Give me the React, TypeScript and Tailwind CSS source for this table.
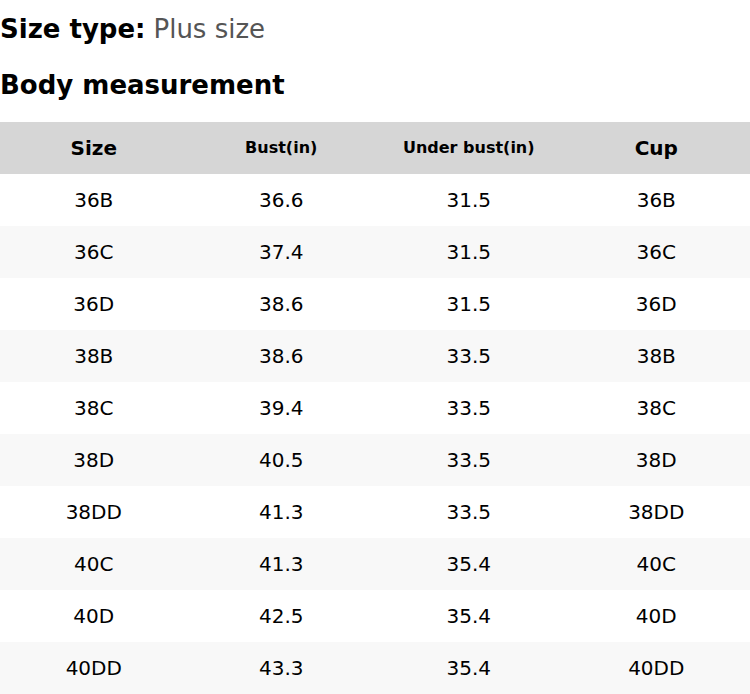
const rows = [
  ['36B', '36.6', '31.5', '36B'],
  ['36C', '37.4', '31.5', '36C'],
  ['36D', '38.6', '31.5', '36D'],
  ['38B', '38.6', '33.5', '38B'],
  ['38C', '39.4', '33.5', '38C'],
  ['38D', '40.5', '33.5', '38D'],
  ['38DD', '41.3', '33.5', '38DD'],
  ['40C', '41.3', '35.4', '40C'],
  ['40D', '42.5', '35.4', '40D'],
  ['40DD', '43.3', '35.4', '40DD'],
];

export default function App() {
  return (
    <div className="w-[750px] bg-white text-black font-['DejaVu_Sans',sans-serif]">
      {/* Title block */}
      <div className="h-[56px] pt-[2px] flex items-center text-[26px]">
        <span className="font-bold">Size type:</span>
        <span className="ml-2 text-[#555]">Plus size</span>
      </div>
      <div className="h-[56px] pt-[2px] flex items-center text-[26px] font-bold">Body measurement</div>
      <div className="h-[10px]" />

      {/* Table */}
      <div className="grid grid-cols-4">
        <div className="h-[52px] flex items-center justify-center bg-[#d6d6d6] font-bold text-[20px]">Size</div>
        <div className="h-[52px] flex items-center justify-center bg-[#d6d6d6] font-bold text-[16px]">Bust(in)</div>
        <div className="h-[52px] flex items-center justify-center bg-[#d6d6d6] font-bold text-[16px]">Under bust(in)</div>
        <div className="h-[52px] flex items-center justify-center bg-[#d6d6d6] font-bold text-[20px]">Cup</div>
        {rows.map((r, i) =>
          r.map((c, j) => (
            <div
              key={`${i}-${j}`}
              className={`h-[52px] flex items-center justify-center text-[20px] ${i % 2 === 1 ? 'bg-[#f8f8f8]' : 'bg-white'}`}
            >
              {c}
            </div>
          ))
        )}
      </div>
    </div>
  );
}
